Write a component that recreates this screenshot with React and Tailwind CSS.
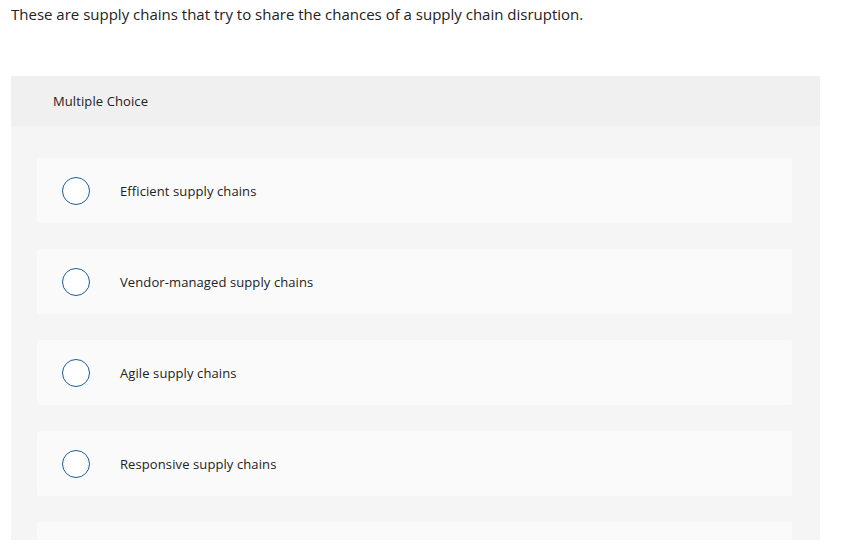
const options = [
  'Efficient supply chains',
  'Vendor-managed supply chains',
  'Agile supply chains',
  'Responsive supply chains',
];

export default function App() {
  return (
    <main className="h-[547px] bg-white text-[#222]" style={{ fontFamily: '"Open Sans", Lato, sans-serif' }}>
      <div className="h-[540px] overflow-hidden">
        <p className="pl-[11px] pt-[4px] text-[15px] leading-[20px]">
          These are supply chains that try to share the chances of a supply chain disruption.
        </p>

        <section className="ml-[11px] mt-[52px] w-[809px] bg-[#f5f5f5]">
          <div className="h-[50px] bg-[#f0f0f0] pl-[42px] pt-[2px] flex items-center text-[13px] tracking-[0.1px] text-[#222]">
            Multiple Choice
          </div>
          <div className="flex flex-col gap-[26px] px-[26px] pt-[32px] pb-[30px]">
            {options.map((opt) => (
              <label key={opt} className="flex h-[65px] w-[755px] items-center rounded-[3px] bg-[#fafafa]">
                <span className="ml-[25px] h-[28px] w-[28px] shrink-0 rounded-full border-[1.5px] border-[#1b5c96] bg-white" />
                <span className="ml-[30px] pt-[2px] text-[13px] tracking-[0.1px] text-[#222]">{opt}</span>
              </label>
            ))}
            <div className="h-[65px] w-[755px] rounded-[3px] bg-[#fafafa]" />
          </div>
        </section>
      </div>
    </main>
  );
}
